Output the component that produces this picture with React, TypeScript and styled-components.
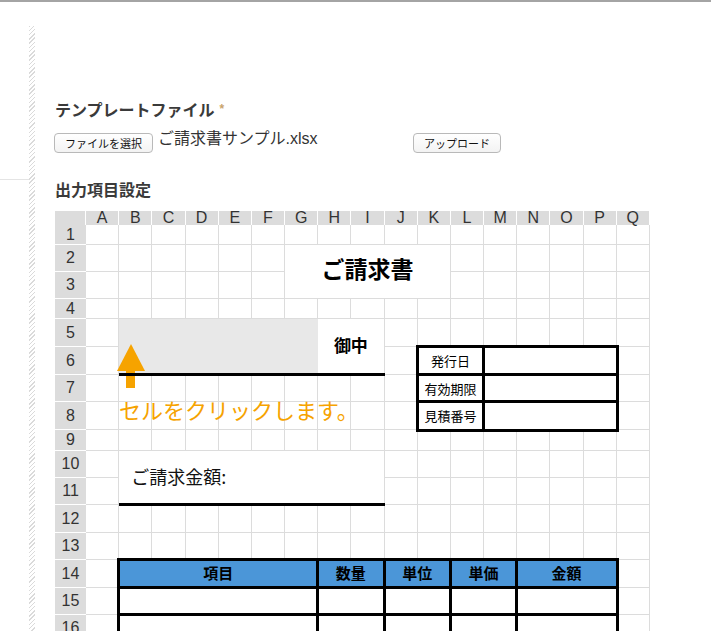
import React from 'react';
import styled, { createGlobalStyle, css } from 'styled-components';

const GlobalStyle = createGlobalStyle`
  html, body {
    margin: 0;
    padding: 0;
    background: #fff;
    overflow: hidden;
  }
  body {
    font-family: "Liberation Sans", "Noto Sans CJK JP", sans-serif;
    color: #333;
  }
`;

const COLS = 'ABCDEFGHIJKLMNOPQ'.split('');
const ROW_HEIGHTS = [20, 27, 27, 20, 28, 28, 27, 28, 21, 27, 27, 28, 27, 28, 27, 27, 27];
const GRID_LINE = '#dcdcdc';
const HEAD_BG = '#dcdcdc';

const Page = styled.div`
  display: flex;
  min-height: 100vh;
  box-sizing: border-box;
  border-top: 2px solid #a4a4a4;
`;

const Sidebar = styled.aside`
  width: 29px;
  flex-shrink: 0;
`;

const SidebarBlock = styled.div`
  height: 177px;
  border-bottom: 1px solid #e4e4e4;
`;

const Hatch = styled.div`
  width: 6px;
  flex-shrink: 0;
  margin-top: 24px;
  background: repeating-linear-gradient(135deg, #dadada 0 1px, transparent 1px 3px);
`;

const Main = styled.main`
  flex: 1;
  padding: 97px 0 0 20px;
`;

const FieldLabel = styled.div`
  height: 24px;
  font-size: 16px;
  font-weight: bold;
  line-height: 24px;
  color: #3a3a3a;
`;

const Required = styled.span`
  margin-left: 5px;
  font-size: 12px;
  line-height: 0;
  color: #c9a46a;
  vertical-align: 3px;
`;

const FileRow = styled.div`
  display: flex;
  align-items: flex-start;
  margin-top: 10px;
  height: 20px;
`;

const FileField = styled.div`
  display: flex;
  align-items: flex-start;
  gap: 5px;
  width: 359px;
  margin-left: -1px;
`;

const Button = styled.button`
  height: 20px;
  padding: 0 10px;
  box-sizing: border-box;
  border: 1px solid #b9b9b9;
  border-radius: 4px;
  background: linear-gradient(#ffffff, #f3f3f3);
  font-family: "Noto Sans CJK JP", sans-serif;
  font-size: 11px;
  line-height: 18px;
  color: #111;
  white-space: nowrap;
`;

const FileName = styled.span`
  margin-top: -4px;
  font-size: 16px;
  line-height: 20px;
  color: #333;
`;

const SectionLabel = styled(FieldLabel)`
  margin-top: 26px;
`;

const SheetGrid = styled.div`
  position: relative;
  margin-top: 8px;
  display: grid;
  grid-template-columns: 31px repeat(17, 33.18px);
  grid-template-rows: 14px ${ROW_HEIGHTS.map((h) => `${h}px`).join(' ')};
  width: max-content;
`;

type PlaceProps = { $r: number; $c: number; $rs?: number; $cs?: number };

const placed = css<PlaceProps>`
  grid-row: ${(p) => p.$r + 1} / span ${(p) => p.$rs ?? 1};
  grid-column: ${(p) => p.$c + 2} / span ${(p) => p.$cs ?? 1};
`;

const Corner = styled.div`
  grid-row: 1;
  grid-column: 1;
  background: ${HEAD_BG};
  border-right: 1px solid #fff;
`;

const ColHead = styled.div<{ $c: number }>`
  grid-row: 1;
  grid-column: ${(p) => p.$c + 2};
  background: ${HEAD_BG};
  border-right: 1px solid #fff;
  font-size: 16px;
  line-height: 14px;
  text-align: center;
  color: #333;
`;

const RowHead = styled.div<{ $r: number }>`
  grid-row: ${(p) => p.$r + 1};
  grid-column: 1;
  display: flex;
  align-items: center;
  justify-content: center;
  background: ${HEAD_BG};
  border-bottom: 1px solid #fff;
  font-size: 16px;
  color: #333;
`;

const Cell = styled.div<PlaceProps & { $underline?: boolean }>`
  ${placed};
  box-sizing: border-box;
  border-right: 1px solid ${GRID_LINE};
  border-bottom: 1px solid ${GRID_LINE};
  ${(p) =>
    p.$underline &&
    css`
      position: relative;
      &::after {
        content: '';
        position: absolute;
        left: 0;
        right: -1px;
        bottom: -2px;
        height: 3px;
        background: #000;
        z-index: 2;
      }
    `}
`;

const TitleCell = styled(Cell)`
  display: flex;
  align-items: center;
  justify-content: center;
  padding-bottom: 8px;
  background: #fff;
  font-family: "Noto Sans CJK JP", sans-serif;
  font-size: 23px;
  font-weight: bold;
  color: #000;
`;

const FillCell = styled(Cell)`
  background: #e8e8e8;
  border-right: none;
`;

const HonorificCell = styled(Cell)`
  display: flex;
  align-items: center;
  justify-content: center;
  padding-bottom: 5px;
  background: #fff;
  font-family: "Noto Sans CJK JP", sans-serif;
  font-size: 17px;
  font-weight: bold;
  color: #000;
`;

const AmountCell = styled(Cell)`
  display: flex;
  align-items: center;
  padding: 0 0 4px 12px;
  background: #fff;
  font-family: "Noto Sans CJK JP", sans-serif;
  font-size: 18px;
  color: #111;
`;

const BoxedCell = styled(Cell)<{ $head?: boolean }>`
  display: flex;
  align-items: center;
  justify-content: center;
  background: ${(p) => (p.$head ? '#4b96d8' : '#fff')};
  outline: 3px solid #000;
  outline-offset: -1.5px;
  font-family: "Noto Sans CJK JP", sans-serif;
  color: #000;
`;

const InfoCell = styled(BoxedCell)`
  font-size: 13px;
`;

const ItemCell = styled(BoxedCell)`
  padding-bottom: 2px;
  font-size: 15px;
  font-weight: bold;
`;

const Annotation = styled.div`
  position: absolute;
  left: 62px;
  top: 133px;
  z-index: 1;
  display: flex;
  flex-direction: column;
  align-items: flex-start;
  pointer-events: none;
`;

const Hint = styled.div`
  margin: 6px 0 0 2px;
  font-family: "Noto Sans CJK JP", sans-serif;
  font-size: 22px;
  line-height: 28px;
  color: #f6a300;
  white-space: nowrap;
`;

type Kind = 'title' | 'fill' | 'honorific' | 'amount' | 'info' | 'itemHead' | 'item';

interface Block {
  kind: Kind;
  r: number;
  c: string;
  rs?: number;
  cs?: number;
  text?: string;
}

const col = (letter: string) => COLS.indexOf(letter);

const ITEM_SPANS: [string, number, string][] = [
  ['B', 6, '項目'],
  ['H', 2, '数量'],
  ['J', 2, '単位'],
  ['L', 2, '単価'],
  ['N', 3, '金額'],
];

const BLOCKS: Block[] = [
  { kind: 'title', r: 2, c: 'G', rs: 2, cs: 5, text: 'ご請求書' },
  { kind: 'fill', r: 5, c: 'B', rs: 2, cs: 6 },
  { kind: 'honorific', r: 5, c: 'H', rs: 2, cs: 2, text: '御中' },
  { kind: 'info', r: 6, c: 'K', cs: 2, text: '発行日' },
  { kind: 'info', r: 6, c: 'M', cs: 4 },
  { kind: 'info', r: 7, c: 'K', cs: 2, text: '有効期限' },
  { kind: 'info', r: 7, c: 'M', cs: 4 },
  { kind: 'info', r: 8, c: 'K', cs: 2, text: '見積番号' },
  { kind: 'info', r: 8, c: 'M', cs: 4 },
  { kind: 'amount', r: 10, c: 'B', rs: 2, cs: 8, text: 'ご請求金額:' },
  ...ITEM_SPANS.map(([c, cs, text]) => ({ kind: 'itemHead' as Kind, r: 14, c, cs, text })),
  ...[15, 16, 17].flatMap((r) => ITEM_SPANS.map(([c, cs]) => ({ kind: 'item' as Kind, r, c, cs }))),
];

function renderBlock(b: Block, i: number) {
  const place = { $r: b.r, $c: col(b.c), $rs: b.rs, $cs: b.cs };
  switch (b.kind) {
    case 'title':
      return <TitleCell key={i} {...place}>{b.text}</TitleCell>;
    case 'fill':
      return <FillCell key={i} {...place} $underline />;
    case 'honorific':
      return <HonorificCell key={i} {...place} $underline>{b.text}</HonorificCell>;
    case 'amount':
      return <AmountCell key={i} {...place} $underline>{b.text}</AmountCell>;
    case 'info':
      return <InfoCell key={i} {...place}>{b.text}</InfoCell>;
    case 'itemHead':
      return <ItemCell key={i} {...place} $head>{b.text}</ItemCell>;
    default:
      return <ItemCell key={i} {...place} />;
  }
}

function UpArrow() {
  return (
    <svg width="28" height="45" viewBox="0 0 28 45">
      <polygon points="0,27 14,0 28,27" fill="#f6a300" />
      <rect x="9" y="26" width="9" height="18" fill="#f6a300" />
    </svg>
  );
}

function Sheet() {
  const covered = new Set<string>();
  BLOCKS.forEach((b) => {
    for (let r = b.r; r < b.r + (b.rs ?? 1); r++) {
      for (let c = col(b.c); c < col(b.c) + (b.cs ?? 1); c++) covered.add(`${r}-${c}`);
    }
  });

  const cells: React.ReactNode[] = [];
  ROW_HEIGHTS.forEach((_, ri) => {
    const r = ri + 1;
    COLS.forEach((_, c) => {
      if (!covered.has(`${r}-${c}`)) cells.push(<Cell key={`${r}-${c}`} $r={r} $c={c} />);
    });
  });

  return (
    <SheetGrid>
      <Corner />
      {COLS.map((letter, c) => (
        <ColHead key={letter} $c={c}>{letter}</ColHead>
      ))}
      {ROW_HEIGHTS.map((_, ri) => (
        <RowHead key={ri} $r={ri + 1}>{ri + 1}</RowHead>
      ))}
      {cells}
      {BLOCKS.map(renderBlock)}
      <Annotation>
        <UpArrow />
        <Hint>セルをクリックします。</Hint>
      </Annotation>
    </SheetGrid>
  );
}

export default function App() {
  return (
    <>
      <GlobalStyle />
      <Page>
        <Sidebar>
          <SidebarBlock />
        </Sidebar>
        <Hatch />
        <Main>
          <FieldLabel>
            テンプレートファイル<Required>*</Required>
          </FieldLabel>
          <FileRow>
            <FileField>
              <Button type="button">ファイルを選択</Button>
              <FileName>ご請求書サンプル.xlsx</FileName>
            </FileField>
            <Button type="button">アップロード</Button>
          </FileRow>
          <SectionLabel>出力項目設定</SectionLabel>
          <Sheet />
        </Main>
      </Page>
    </>
  );
}
